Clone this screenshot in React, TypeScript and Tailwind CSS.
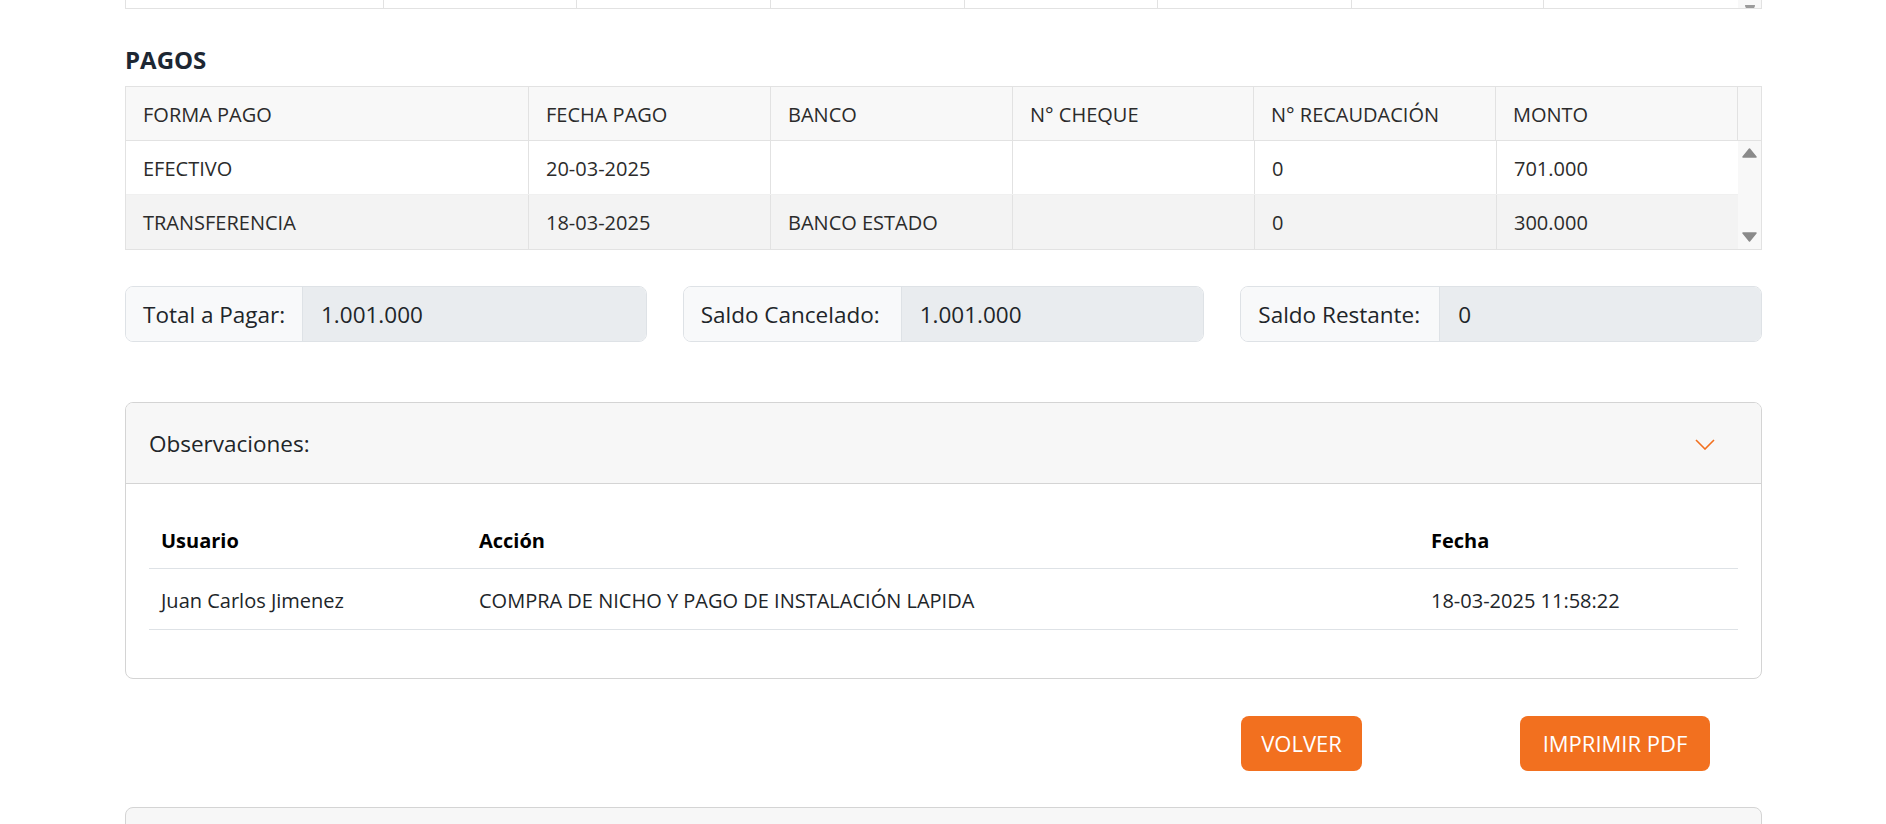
import React from "react";

const font = { fontFamily: '"Open Sans", "Noto Sans", sans-serif' };

function Chevron() {
  return (
    <svg width="20" height="11" viewBox="0 0 20 11" fill="none">
      <path d="M1 1 L10 10 L19 1" stroke="#f2701f" strokeWidth="1.6" />
    </svg>
  );
}

function ArrowUp() {
  return (
    <svg width="15" height="10" viewBox="0 0 15 10">
      <path d="M7.5 1 L14 9 L1 9 Z" fill="#8a8a8a" stroke="#8a8a8a" strokeWidth="1.5" strokeLinejoin="round" />
    </svg>
  );
}

function ArrowDown() {
  return (
    <svg width="15" height="10" viewBox="0 0 15 10">
      <path d="M1 1 L14 1 L7.5 9 Z" fill="#8a8a8a" stroke="#8a8a8a" strokeWidth="1.5" strokeLinejoin="round" />
    </svg>
  );
}

const pagos = [
  { forma: "EFECTIVO", fecha: "20-03-2025", banco: "", cheque: "", rec: "0", monto: "701.000" },
  { forma: "TRANSFERENCIA", fecha: "18-03-2025", banco: "BANCO ESTADO", cheque: "", rec: "0", monto: "300.000" },
];

export default function App() {
  return (
    <div className="w-[1886px] h-[824px] overflow-hidden bg-white text-[#212529]" style={font}>
      <div className="ml-[125px] w-[1637px]">
        {/* partial top table */}
        <div className="h-[9px] border-x border-b border-[#e2e2e2] grid grid-cols-[258px_193px_194px_194px_193px_194px_192px_194px_1fr]">
          <div className="border-r border-[#e2e2e2]" />
          <div className="border-r border-[#e2e2e2]" />
          <div className="border-r border-[#e2e2e2]" />
          <div className="border-r border-[#e2e2e2]" />
          <div className="border-r border-[#e2e2e2]" />
          <div className="border-r border-[#e2e2e2]" />
          <div className="border-r border-[#e2e2e2]" />
          <div />
          <div className="bg-[#f8f8f8] flex justify-center items-end overflow-hidden">
            <div className="-mb-[1px] w-[10px] h-[4px] bg-[#9a9a9a] rounded-b-full" />
          </div>
        </div>

        {/* PAGOS */}
        <h5 className="mt-[36px] text-[24px] leading-[30px] font-bold text-[#1d2733]">PAGOS</h5>

        <div className="mt-[11px] border border-[#e2e2e2] text-[20px] text-[#2b2b2b]">
          <div className="grid grid-cols-[403px_242px_242px_241px_242px_242px_1fr] bg-[#f8f8f8] border-b border-[#e2e2e2] h-[54px]">
            {["FORMA PAGO", "FECHA PAGO", "BANCO", "N° CHEQUE", "N° RECAUDACIÓN", "MONTO"].map((h) => (
              <div key={h} className="border-r border-[#e2e2e2] pl-[17px] pt-[2px] flex items-center">
                {h}
              </div>
            ))}
            <div />
          </div>
          <div className="flex">
            <div className="flex-1">
              {pagos.map((p, i) => (
                <div
                  key={i}
                  className={`grid grid-cols-[403px_242px_242px_242px_242px_1fr] h-[54px] ${
                    i === 0 ? "bg-white border-b border-[#f0f0f0]" : "bg-[#f3f3f3]"
                  }`}
                >
                  <div className="border-r border-[#e2e2e2] pl-[17px] pt-[2px] flex items-center">{p.forma}</div>
                  <div className="border-r border-[#e2e2e2] pl-[17px] pt-[2px] flex items-center">{p.fecha}</div>
                  <div className="border-r border-[#e2e2e2] pl-[17px] pt-[2px] flex items-center">{p.banco}</div>
                  <div className="border-r border-[#e2e2e2] pl-[17px] pt-[2px] flex items-center">{p.cheque}</div>
                  <div className="border-r border-[#e2e2e2] pl-[17px] pt-[2px] flex items-center">{p.rec}</div>
                  <div className="pl-[17px] pt-[2px] flex items-center">{p.monto}</div>
                </div>
              ))}
            </div>
            <div className="w-[23px] bg-[#f8f8f8] flex flex-col items-center justify-between py-[7px]">
              <ArrowUp />
              <ArrowDown />
            </div>
          </div>
        </div>

        {/* totals */}
        <div className="mt-[36px] grid grid-cols-3 gap-[36px] text-[22.5px]">
          {[
            { l: "Total a Pagar:", v: "1.001.000", w: "w-[177px]" },
            { l: "Saldo Cancelado:", v: "1.001.000", w: "w-[218px]" },
            { l: "Saldo Restante:", v: "0", w: "w-[199px]" },
          ].map((g) => (
            <div key={g.l} className="flex h-[56px] border border-[#dee2e6] rounded-[8px] overflow-hidden">
              <div className={`${g.w} shrink-0 bg-[#f8f9fa] border-r border-[#dee2e6] pl-[17px] pt-[1px] flex items-center`}>
                {g.l}
              </div>
              <div className="flex-1 bg-[#e9ecef] pl-[18px] pt-[1px] flex items-center">{g.v}</div>
            </div>
          ))}
        </div>

        {/* Observaciones */}
        <div className="mt-[60px] border border-[#d4d4d4] rounded-[8px] overflow-hidden">
          <div className="h-[81px] bg-[#f7f7f7] border-b border-[#d4d4d4] flex items-center justify-between pl-[23px] pr-[46px] pt-[2px] text-[22.5px]">
            <span>Observaciones:</span>
            <Chevron />
          </div>
          <div className="px-[23px] pt-[20px] pb-[48px] text-[20px] text-black">
            <div className="grid grid-cols-[318px_952px_1fr] border-b border-[#dee2e6] h-[65px] items-end pb-[12px] font-bold">
              <div className="pl-[12px]">Usuario</div>
              <div className="pl-[12px]">Acción</div>
              <div className="pl-[12px]">Fecha</div>
            </div>
            <div className="grid grid-cols-[318px_952px_1fr] border-b border-[#dee2e6] h-[61px] pt-[4px] items-center text-[#212529]">
              <div className="pl-[12px]">Juan Carlos Jimenez</div>
              <div className="pl-[12px]">COMPRA DE NICHO Y PAGO DE INSTALACIÓN LAPIDA</div>
              <div className="pl-[12px]">18-03-2025 11:58:22</div>
            </div>
          </div>
        </div>

        {/* buttons */}
        <div className="mt-[37px] flex justify-end gap-[158px] pr-[52px]">
          <button className="h-[55px] w-[121px] bg-[#f2701f] text-white text-[22px] rounded-[8px] flex items-center justify-center">
            VOLVER
          </button>
          <button className="h-[55px] w-[190px] bg-[#f2701f] text-white text-[22px] rounded-[8px] flex items-center justify-center">
            IMPRIMIR PDF
          </button>
        </div>

        {/* bottom card */}
        <div className="mt-[36px] h-[60px] border border-[#d4d4d4] rounded-t-[8px] bg-[#f7f7f7]" />
      </div>
    </div>
  );
}
